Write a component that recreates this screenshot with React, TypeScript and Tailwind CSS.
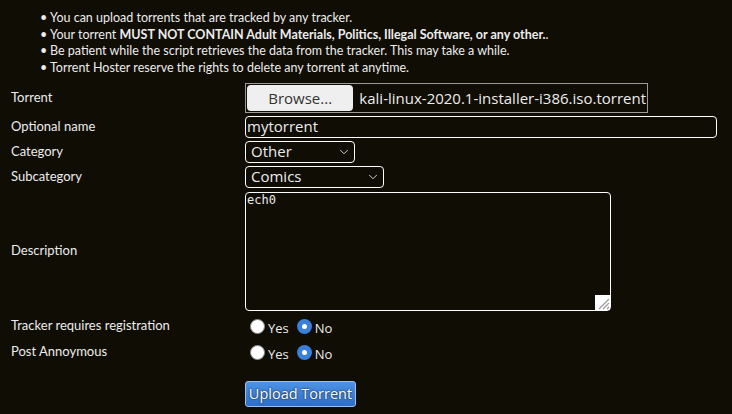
import { ChevronDown } from "lucide-react";

const notes = [
  <>You can upload torrents that are tracked by any tracker.</>,
  <>
    Your torrent <b>MUST NOT CONTAIN Adult Materials, Politics, Illegal Software, or any other.</b>.
  </>,
  <>Be patient while the script retrieves the data from the tracker. This may take a while.</>,
  <>Torrent Hoster reserve the rights to delete any torrent at anytime.</>,
];

function Radio({ checked }: { checked?: boolean }) {
  return checked ? (
    <span className="flex h-[15px] w-[15px] items-center justify-center rounded-full bg-[#3a7fd9]">
      <span className="h-[5px] w-[5px] rounded-full bg-white" />
    </span>
  ) : (
    <span className="h-[15px] w-[15px] rounded-full border border-[#8a8a8a] bg-white" />
  );
}

function YesNo() {
  return (
    <div className="ml-[5px] flex items-center font-['Open_Sans'] text-[13px]">
      <Radio />
      <span className="ml-[3px] mt-[5px]">Yes</span>
      <span className="ml-[8px]">
        <Radio checked />
      </span>
      <span className="ml-[3px] mt-[5px]">No</span>
    </div>
  );
}

function Select({ value, width }: { value: string; width: string }) {
  return (
    <div
      className={`flex h-[22px] items-center justify-between rounded-[4px] border border-white pl-[5px] pr-[3px] font-['Open_Sans'] text-[15px] ${width}`}
    >
      <span>{value}</span>
      <ChevronDown size={14} strokeWidth={1.5} />
    </div>
  );
}

export default function App() {
  const label = "flex items-center";
  return (
    <div className="min-h-screen bg-[#100d05] font-['Lato'] text-[13px] text-[#ececec]">
      <ul className="pl-[40px] pt-[10px] text-[12.5px] leading-[16.5px]">
        {notes.map((n, i) => (
          <li key={i} className="flex">
            <span className="w-[10px]">•</span>
            <span>{n}</span>
          </li>
        ))}
      </ul>

      <div className="mt-[6px] grid grid-cols-[234px_1fr] pl-[11px]">
        <div className={`${label} h-[32px]`}>Torrent</div>
        <div className="flex h-[32px] items-center">
          <div className="flex h-[30px] w-[403px] items-center border border-[#9a9a9a] p-[1px] font-['Open_Sans'] text-[15px]">
            <div className="flex h-full w-[110px] items-center justify-center rounded-[4px] bg-[#efefef] text-[#333]">
              Browse...
            </div>
            <span className="ml-[6px] whitespace-nowrap">kali-linux-2020.1-installer-i386.iso.torrent</span>
          </div>
        </div>

        <div className={`${label} h-[25px]`}>Optional name</div>
        <div className="flex h-[25px] items-center">
          <div className="flex h-[22px] w-[472px] items-center rounded-[4px] border border-white px-[1px] font-['Open_Sans'] text-[15px]">
            mytorrent
          </div>
        </div>

        <div className={`${label} h-[25px]`}>Category</div>
        <div className="flex h-[25px] items-center">
          <Select value="Other" width="w-[110px]" />
        </div>

        <div className={`${label} h-[25px]`}>Subcategory</div>
        <div className="flex h-[25px] items-center">
          <Select value="Comics" width="w-[139px]" />
        </div>

        <div className={`${label} h-[124px]`}>Description</div>
        <div className="flex h-[124px] items-center">
          <div className="relative h-[119px] w-[366px] rounded-[4px] border border-white px-[1px] font-['DejaVu_Sans_Mono'] text-[12px] leading-[15px]">
            ech0
            <svg className="absolute bottom-0 right-0" width="15" height="15" viewBox="0 0 15 15">
              <rect width="15" height="15" fill="#ffffff" />
              <path d="M14 4 L4 14 M14 8 L8 14 M14 12 L12 14" stroke="#9a9a9a" strokeWidth="1.2" />
            </svg>
          </div>
        </div>

        <div className={`${label} h-[26px]`}>Tracker requires registration</div>
        <div className="flex h-[26px] items-center">
          <YesNo />
        </div>

        <div className={`${label} h-[26px]`}>Post Annoymous</div>
        <div className="flex h-[26px] items-center">
          <YesNo />
        </div>

        <div className="h-[16px]" />
        <div className="h-[16px]" />

        <div />
        <div>
          <button className="h-[26px] w-[111px] rounded-[3px] border border-[#9cc0ee] bg-gradient-to-b from-[#4d93e6] to-[#2d6ec8] font-['Open_Sans'] text-[14.5px] text-white [text-shadow:0_0_2px_#000]">
            Upload Torrent
          </button>
        </div>
      </div>
    </div>
  );
}
